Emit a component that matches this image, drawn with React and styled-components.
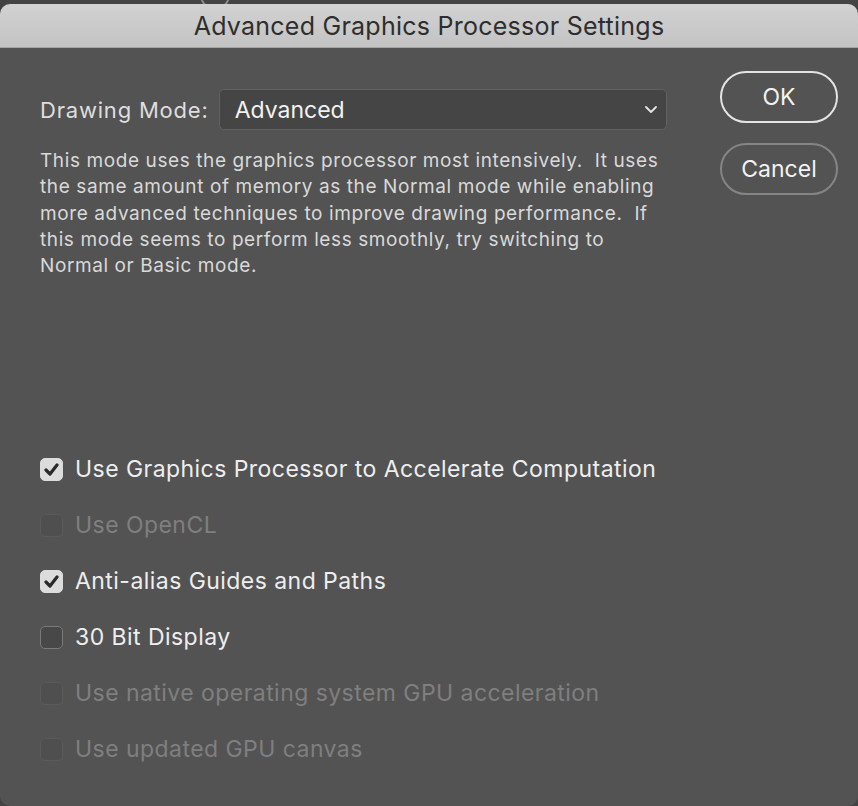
import React from "react";
import styled, { createGlobalStyle } from "styled-components";

const Global = createGlobalStyle`
  html, body { margin: 0; padding: 0; background: #3c3c3c; }
  body { font-family: Inter, "Noto Sans", sans-serif; -webkit-font-smoothing: antialiased; }
  #root { width: 858px; height: 806px; overflow: hidden; }
`;

const Backdrop = styled.div`
  position: relative;
  width: 858px;
  height: 806px;
  padding-top: 4px;
  box-sizing: border-box;
  background: #434343;
`;

const PeekCircle = styled.div`
  position: absolute;
  left: 200px;
  top: -20px;
  width: 26px;
  height: 26px;
  border-radius: 50%;
  border: 2px solid #8a8a8a;
`;

const Window = styled.div`
  position: relative;
  width: 858px;
  height: 802px;
  border-radius: 10px;
  overflow: hidden;
  background: #535353;
  display: flex;
  flex-direction: column;
`;

const TitleBar = styled.div`
  height: 42px;
  flex: none;
  display: flex;
  align-items: center;
  justify-content: center;
  padding-top: 1px;
  background: linear-gradient(#d2d2d2, #c3c3c3);
  border-bottom: 1px solid #a4a4a4;
  color: #2e2e2e;
  font-size: 25px;
  letter-spacing: 0.25px;
`;

const Body = styled.div`
  flex: 1;
  display: flex;
  padding: 0 20px 0 40px;
`;

const Main = styled.div`
  width: 627px;
  display: flex;
  flex-direction: column;
  padding-top: 41px;
`;

const ModeRow = styled.div`
  display: flex;
  align-items: center;
  gap: 10px;
`;

const Label = styled.span`
  color: #dedede;
  font-size: 22px;
  letter-spacing: 0.8px;
`;

const Select = styled.div`
  flex: 1;
  height: 41px;
  box-sizing: border-box;
  border: 1px solid #616161;
  border-radius: 5px;
  background: #454545;
  display: flex;
  align-items: center;
  justify-content: space-between;
  padding: 0 8px 0 15px;
  color: #f2f2f2;
  font-size: 23px;
`;

const Description = styled.p`
  margin: 18px 0 0;
  color: #d9d9d9;
  font-size: 19px;
  line-height: 26.3px;
  white-space: pre;
  letter-spacing: 0.6px;
`;

const Options = styled.div`
  margin-top: 162px;
  display: flex;
  flex-direction: column;
`;

const OptionRow = styled.div`
  height: 56px;
  display: flex;
  align-items: center;
  gap: 12px;
  color: ${(p) => (p.$disabled ? "#7f7f7f" : "#eeeeee")};
  font-size: 23px;
  letter-spacing: 0.45px;
  white-space: nowrap;
`;

const Box = styled.span`
  width: 23px;
  height: 23px;
  box-sizing: border-box;
  border-radius: 5px;
  flex: none;
  display: flex;
  align-items: center;
  justify-content: center;
  background: ${(p) => (p.$checked ? "#dcdcdc" : p.$disabled ? "#4f4f4f" : "#484848")};
  border: 1.5px solid ${(p) => (p.$checked ? "#dcdcdc" : p.$disabled ? "#5a5a5a" : "#7a7a7a")};
`;

const Side = styled.div`
  margin-left: auto;
  padding-top: 23px;
  display: flex;
  flex-direction: column;
  gap: 20px;
`;

const Button = styled.div`
  width: 118px;
  height: 52px;
  box-sizing: border-box;
  border-radius: 26px;
  border: 2px solid ${(p) => (p.$primary ? "#e4e4e4" : "#858585")};
  display: flex;
  align-items: center;
  justify-content: center;
  color: #f2f2f2;
  font-size: 23px;
`;

const Check = () => (
  <svg width="15" height="13" viewBox="0 0 15 13">
    <path d="M2 7 L6 11 L13 2" fill="none" stroke="#2a2a2a" strokeWidth="3.2" strokeLinecap="round" strokeLinejoin="round" />
  </svg>
);

const Chevron = () => (
  <svg width="14" height="9" viewBox="0 0 14 9">
    <path d="M2 2 L7 7 L12 2" fill="none" stroke="#e6e6e6" strokeWidth="1.8" strokeLinecap="round" strokeLinejoin="round" />
  </svg>
);

const options = [
  { label: "Use Graphics Processor to Accelerate Computation", checked: true },
  { label: "Use OpenCL", disabled: true },
  { label: "Anti-alias Guides and Paths", checked: true },
  { label: "30 Bit Display" },
  { label: "Use native operating system GPU acceleration", disabled: true },
  { label: "Use updated GPU canvas", disabled: true },
];

export default function App() {
  return (
    <>
      <Global />
      <Backdrop>
        <PeekCircle />
        <Window>
          <TitleBar>Advanced Graphics Processor Settings</TitleBar>
          <Body>
            <Main>
              <ModeRow>
                <Label>Drawing Mode:</Label>
                <Select>
                  <span>Advanced</span>
                  <Chevron />
                </Select>
              </ModeRow>
              <Description>
                {"This mode uses the graphics processor most intensively.  It uses\nthe same amount of memory as the Normal mode while enabling\nmore advanced techniques to improve drawing performance.  If\nthis mode seems to perform less smoothly, try switching to\nNormal or Basic mode."}
              </Description>
              <Options>
                {options.map((o) => (
                  <OptionRow key={o.label} $disabled={o.disabled}>
                    <Box $checked={o.checked} $disabled={o.disabled}>
                      {o.checked && <Check />}
                    </Box>
                    <span>{o.label}</span>
                  </OptionRow>
                ))}
              </Options>
            </Main>
            <Side>
              <Button $primary>OK</Button>
              <Button>Cancel</Button>
            </Side>
          </Body>
        </Window>
      </Backdrop>
    </>
  );
}
